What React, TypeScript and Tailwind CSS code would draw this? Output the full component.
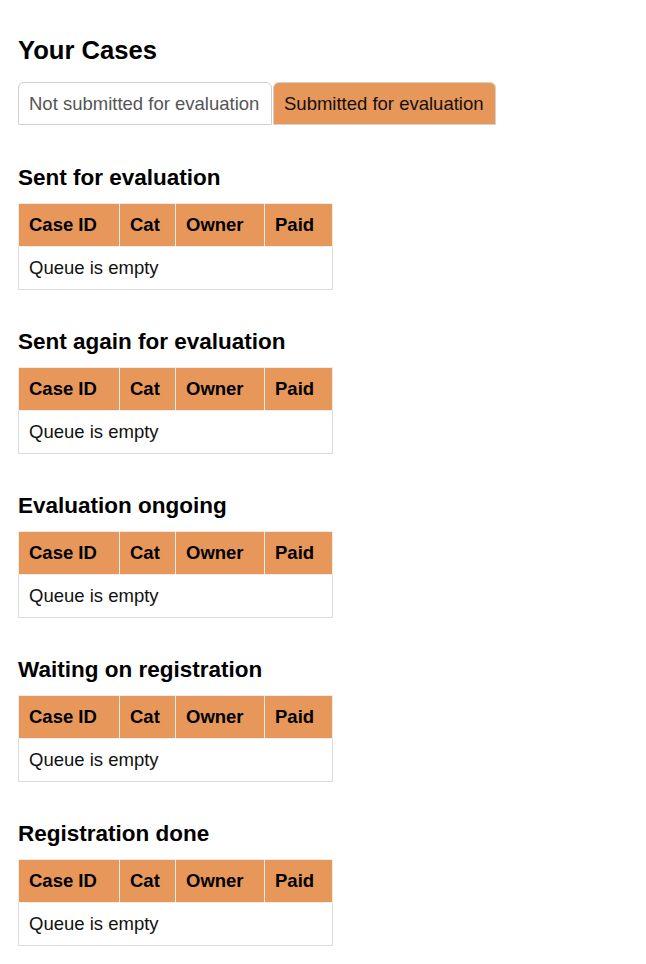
const sections = [
  'Sent for evaluation',
  'Sent again for evaluation',
  'Evaluation ongoing',
  'Waiting on registration',
  'Registration done',
];

const columns = [
  { label: 'Case ID', width: 'w-[101px]' },
  { label: 'Cat', width: 'w-[56px]' },
  { label: 'Owner', width: 'w-[89px]' },
  { label: 'Paid', width: 'w-[68px]' },
];

function CaseTable() {
  return (
    <table className="w-[314px] table-fixed border-collapse border border-[#dcdcdc] text-[18.5px]">
      <thead>
        <tr className="bg-[#e8975a] text-left">
          {columns.map((c) => (
            <th
              key={c.label}
              className={`${c.width} h-[43px] border border-[#ececec] px-[10px] font-bold text-black`}
            >
              {c.label}
            </th>
          ))}
        </tr>
      </thead>
      <tbody>
        <tr>
          <td colSpan={4} className="h-[43px] border border-[#dcdcdc] bg-white px-[10px] text-[#111]">
            Queue is empty
          </td>
        </tr>
      </tbody>
    </table>
  );
}

export default function App() {
  return (
    <div className="min-h-[964px] bg-white px-[18px] pt-[34px] font-['Liberation_Sans',Arial,sans-serif] text-black">
      <h1 className="text-[25.6px] font-bold leading-[32px]">Your Cases</h1>
      <div className="mt-[16px] flex text-[18.5px]">
        <div className="flex h-[43px] w-[254px] items-center rounded-t-[6px] border border-[#cfcfcf] bg-white px-[10px] pt-px text-[#555]">
          Not submitted for evaluation
        </div>
        <div className="ml-px flex h-[43px] w-[223px] items-center rounded-t-[6px] border border-[#d9d0c6] bg-[#e8975a] px-[10px] pt-px text-[#111]">
          Submitted for evaluation
        </div>
      </div>
      <div className="mt-[39px] flex flex-col gap-[38px]">
        {sections.map((s) => (
          <section key={s}>
            <h2 className="mb-[11px] text-[22.5px] font-bold leading-[28px]">{s}</h2>
            <CaseTable />
          </section>
        ))}
      </div>
    </div>
  );
}
